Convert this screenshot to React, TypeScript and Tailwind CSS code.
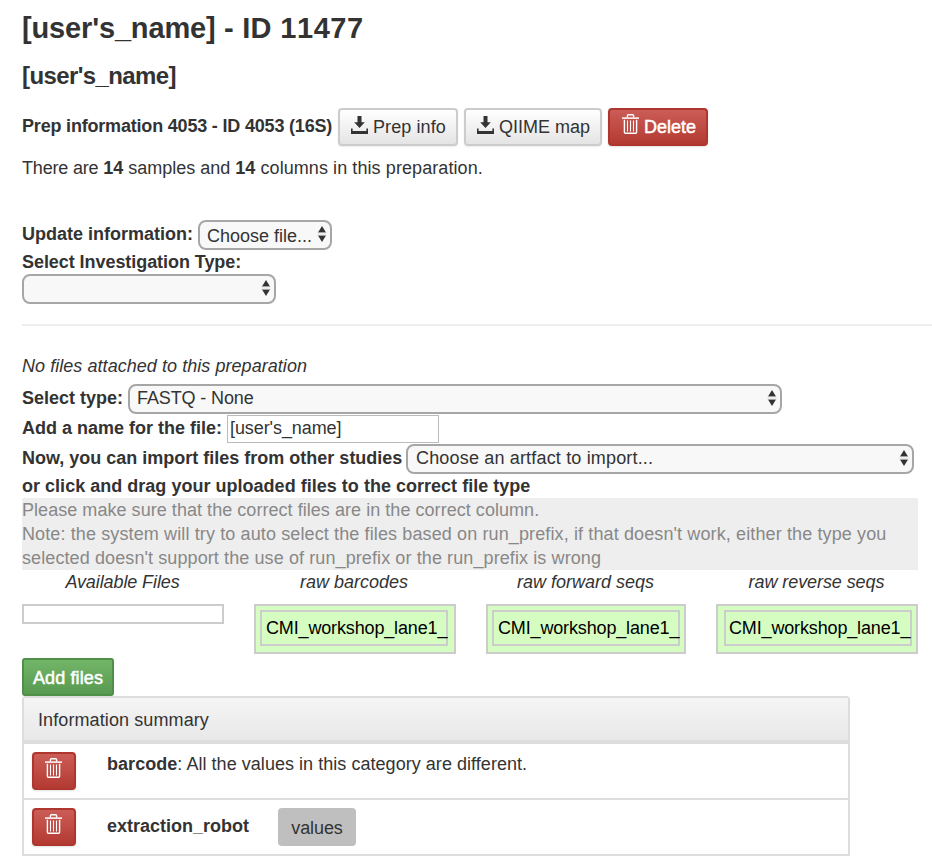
import React from "react";

function DownloadIcon() {
  return (
    <svg width="17" height="18" viewBox="0 0 17 18" fill="#333" className="-mt-[4px] shrink-0">
      <path d="M6.5 0h4v6.2h3.3L8.5 12 3.2 6.2h3.3z" />
      <path d="M0 12.4h1.6V15h13.8v-2.6H17V18H0z" />
    </svg>
  );
}

function TrashIcon() {
  return (
    <svg width="17" height="20" viewBox="0 0 17 20" fill="none" stroke="#fff" className="shrink-0">
      <path d="M5.4 3.6V1.7q0-.9.9-.9h4.4q.9 0 .9.9v1.9" strokeWidth="1.4" />
      <path d="M0 4.1h17" strokeWidth="1.5" />
      <path d="M2.4 5.8v12.4q0 1 1 1h10.2q1 0 1-1V5.8" strokeWidth="1.4" />
      <path d="M5.5 6.4v11M8.5 6.4v11M11.5 6.4v11" strokeWidth="1.1" />
    </svg>
  );
}

function Arrows() {
  return (
    <svg width="10" height="18" viewBox="0 0 10 18" className="mt-[3px] shrink-0">
      <path d="M5 1l4 6.4H1zM5 17l4-6.4H1z" fill="#333" />
      <path d="M0.5 7.8h9M0.5 10.2h9" stroke="#bbb" strokeWidth="0.6" />
    </svg>
  );
}

function Select({
  className,
  textClass = "",
  children,
}: {
  className: string;
  textClass?: string;
  children?: React.ReactNode;
}) {
  return (
    <button
      className={
        "flex h-[30px] shrink-0 items-start justify-between rounded-[8px] border-2 border-[#a6a6a6] bg-[#f8f8f8] pr-[3px] pl-[7px] leading-6 " +
        className
      }
    >
      <span className={textClass}>{children}</span>
      <Arrows />
    </button>
  );
}

const red =
  "flex h-[38px] shrink-0 items-start rounded-[4px] border-2 border-[#ae362f] bg-linear-to-b from-[#cb5c56] to-[#b33a32] text-white shadow-[0_1px_2px_rgba(0,0,0,0.12)]";
const grey =
  "flex h-[38px] shrink-0 items-center rounded-[4px] border-2 border-[#ccc] bg-linear-to-b from-white to-[#e4e4e4] shadow-[0_1px_2px_rgba(0,0,0,0.08)]";

function Column({
  title,
  titleClass,
  boxClass,
  innerClass,
}: {
  title: string;
  titleClass: string;
  boxClass: string;
  innerClass?: string;
}) {
  return (
    <div className={"flex shrink-0 flex-col items-center " + boxClass}>
      <div className={"h-[34px] leading-6 italic " + titleClass}>{title}</div>
      {innerClass ? (
        <div className="h-[50px] w-full border-2 border-[#ccc] bg-[#d5fdc1] pt-1">
          <div
            className={
              "h-9 w-[188px] border-2 border-[#ccc] pt-1 leading-6 tracking-[-0.15px] whitespace-nowrap text-black " +
              innerClass
            }
          >
            CMI_workshop_lane1_
          </div>
        </div>
      ) : (
        <div className="h-5 w-full border-2 border-[#ccc]" />
      )}
    </div>
  );
}

export default function App() {
  return (
    <main className="h-[856px] w-[932px] overflow-hidden bg-white pl-[22px] font-['Liberation_Sans',Arial,sans-serif] text-[18px] leading-6 whitespace-nowrap text-[#333]">
      <h1 className="h-14 text-[29px] leading-[56px] font-bold">
        <span className="tracking-[-0.15px]">[user's_name]</span>
        <span className="tracking-[0.3px]"> - ID </span>
        <span className="tracking-[0.6px] [font-kerning:none]">11477</span>
      </h1>
      <h2 className="h-[38px] text-[24px] leading-10 font-bold tracking-[-0.6px]">[user's_name]</h2>

      <div className="mt-[14px] flex h-[38px]">
        <div className="w-[316px] shrink-0 leading-9 font-bold tracking-[-0.19px]">
          Prep information 4053 - ID 4053 (16S)
        </div>
        <button className={grey + " w-[120px] gap-[5px] pl-[11px]"}>
          <DownloadIcon />
          <span className="tracking-[0.1px]">Prep info</span>
        </button>
        <button className={grey + " ml-[6px] w-[138px] gap-[5px] pl-[11px]"}>
          <DownloadIcon />
          <span>QIIME map</span>
        </button>
        <button className={red + " ml-[6px] w-[100px] gap-[5px] pt-[4px] pl-[12px]"}>
          <TrashIcon />
          <span className="pt-[1px] [-webkit-text-stroke:0.5px_white]">Delete</span>
        </button>
      </div>
      <p className="mt-[10px] h-6">
        <span className="tracking-[-0.18px]">There are </span>
        <b>14</b> samples and <b>14</b>
        <span className="tracking-[0.08px]"> columns in this preparation.</span>
      </p>

      <div className="mt-10 flex h-[30px]">
        <label className="w-[176px] shrink-0 leading-7 font-bold">Update information:</label>
        <Select className="w-[134px]" textClass="mt-[1.5px]">
          Choose file...
        </Select>
      </div>
      <div className="h-6 font-bold tracking-[-0.06px]">Select Investigation Type:</div>
      <Select className="w-[254px]" />
      <hr className="mt-5 h-[2px] border-0 bg-[#eee]" />

      <p className="mt-7 h-6 tracking-[0.05px] italic">No files attached to this preparation</p>
      <div className="mt-[6px] flex h-[30px]">
        <label className="w-[106px] shrink-0 leading-7 font-bold">Select type:</label>
        <Select className="w-[654px]" textClass="tracking-[-0.12px]">
          FASTQ - None
        </Select>
      </div>
      <div className="flex h-[30px]">
        <label className="w-[205px] shrink-0 leading-7 font-bold">Add a name for the file:</label>
        <input
          className="mt-[1px] h-7 w-[212px] border border-[#bbb] bg-white px-[2px] pb-[2px] tracking-[-0.08px] outline-none"
          defaultValue="[user's_name]"
        />
      </div>
      <div className="flex h-[30px]">
        <label className="w-[384px] shrink-0 leading-7 font-bold">Now, you can import files from other studies</label>
        <Select className="w-[508px]" textClass="ml-[1px] tracking-[0.17px]">
          Choose an artfact to import...
        </Select>
      </div>
      <div className="h-6 font-bold tracking-[0.02px]">
        or click and drag your uploaded files to the correct file type
      </div>

      <div className="h-[72px] w-[896px] bg-[#eee] text-[#888]">
        <p className="tracking-[0.045px]">Please make sure that the correct files are in the correct column.</p>
        <p className="tracking-[0.12px]">
          Note: the system will try to auto select the files based on run_prefix, if that doesn't work, either the type you
        </p>
        <p className="tracking-[0.1px]">selected doesn't support the use of run_prefix or the run_prefix is wrong</p>
      </div>

      <div className="flex h-[88px] gap-[30px]">
        <Column title="Available Files" titleClass="pr-[1px] tracking-[-0.1px]" boxClass="w-[202px]" />
        <Column title="raw barcodes" titleClass="pr-[2px]" boxClass="w-[202px]" innerClass="ml-1 pl-1" />
        <Column title="raw forward seqs" titleClass="pr-[1px]" boxClass="w-[200px]" innerClass="ml-1 pl-1" />
        <Column title="raw reverse seqs" titleClass="pr-[1px] tracking-[-0.08px]" boxClass="w-[202px]" innerClass="ml-[6px] pl-[3px]" />
      </div>

      <button className="flex h-[38px] w-[92px] items-center justify-center rounded-[3px] border-2 border-[#4f8f47] bg-linear-to-b from-[#73b568] to-[#579a50] text-white">
        <span className="pt-[2px] tracking-[0.12px] [-webkit-text-stroke:0.5px_white]">Add files</span>
      </button>

      <section className="h-40 w-[828px] rounded-t-[4px] border-2 border-[#ddd]">
        <div className="h-[46px] border-b-4 border-[#ddd] bg-linear-to-b from-[#f5f5f5] to-[#e8e8e8] pl-[14px] leading-[44px] tracking-[0.1px]">
          Information summary
        </div>
        <div className="flex h-14 border-b-2 border-[#ddd] pt-2 pl-2">
          <button className={red + " w-11 pt-[4px] pl-[11px]"}>
            <TrashIcon />
          </button>
          <div className="ml-[31px] tracking-[0.04px]">
            <b>barcode</b>: All the values in this category are different.
          </div>
        </div>
        <div className="flex h-[54px] pt-2 pl-2">
          <button className={red + " w-11 pt-[4px] pl-[11px]"}>
            <TrashIcon />
          </button>
          <div className="ml-[31px] w-[171px] shrink-0 pt-[6px] font-bold">extraction_robot</div>
          <button className="h-[38px] w-[78px] rounded-[4px] bg-[#bfbfbf] pt-[2px] tracking-[-0.1px]">values</button>
        </div>
      </section>
    </main>
  );
}
